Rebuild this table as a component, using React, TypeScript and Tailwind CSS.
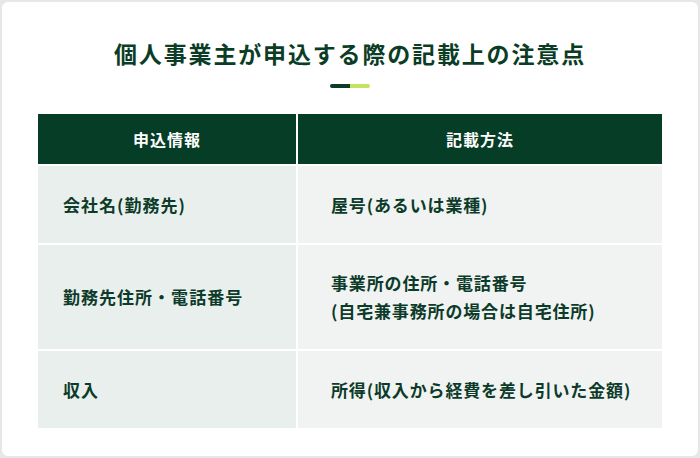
import React from 'react';

const rows = [
  { label: '会社名(勤務先)', value: ['屋号(あるいは業種)'] },
  { label: '勤務先住所・電話番号', value: ['事業所の住所・電話番号', '(自宅兼事務所の場合は自宅住所)'] },
  { label: '収入', value: ['所得(収入から経費を差し引いた金額)'] },
];

export default function App() {
  return (
    <div
      className="w-[700px] h-[458px] bg-[#e7e7e7] p-[2px]"
      style={{ fontFamily: '"Noto Sans CJK JP", "Noto Sans", sans-serif' }}
    >
      <div className="h-full bg-white rounded-md px-[36px] pt-[35px]">
        {/* タイトル */}
        <h2 className="text-center text-[23px] leading-[32px] font-bold tracking-[0.08em] text-[#0b3d26]">
          個人事業主が申込する際の記載上の注意点
        </h2>
        <div className="flex justify-center mt-[15px] mb-[26px]">
          <div className="flex h-[4px] w-[40px] rounded-full overflow-hidden">
            <div className="w-1/2 bg-[#0b3d26]" />
            <div className="w-1/2 bg-[#c4e35e]" />
          </div>
        </div>

        {/* 表 */}
        <div className="grid grid-cols-[258px_1fr] gap-[2px] font-bold">
          <div className="h-[50px] bg-[#063d26] text-white text-[16px] tracking-[0.06em] flex items-center justify-center">申込情報</div>
          <div className="h-[50px] bg-[#063d26] text-white text-[16px] tracking-[0.06em] flex items-center justify-center">記載方法</div>
          {rows.map((row) => (
            <React.Fragment key={row.label}>
              <div className="bg-[#e9efed] text-[#0d3b2a] text-[17px] tracking-[0.06em] flex items-center pl-[25px] min-h-[77px] py-[24px] leading-[28px]">
                {row.label}
              </div>
              <div className="bg-[#f1f3f2] text-[#0d3b2a] text-[17px] tracking-[0.05em] flex flex-col justify-center pl-[33px] min-h-[77px] py-[24px] leading-[28px]">
                {row.value.map((v) => (
                  <span key={v}>{v}</span>
                ))}
              </div>
            </React.Fragment>
          ))}
        </div>
      </div>
    </div>
  );
}
